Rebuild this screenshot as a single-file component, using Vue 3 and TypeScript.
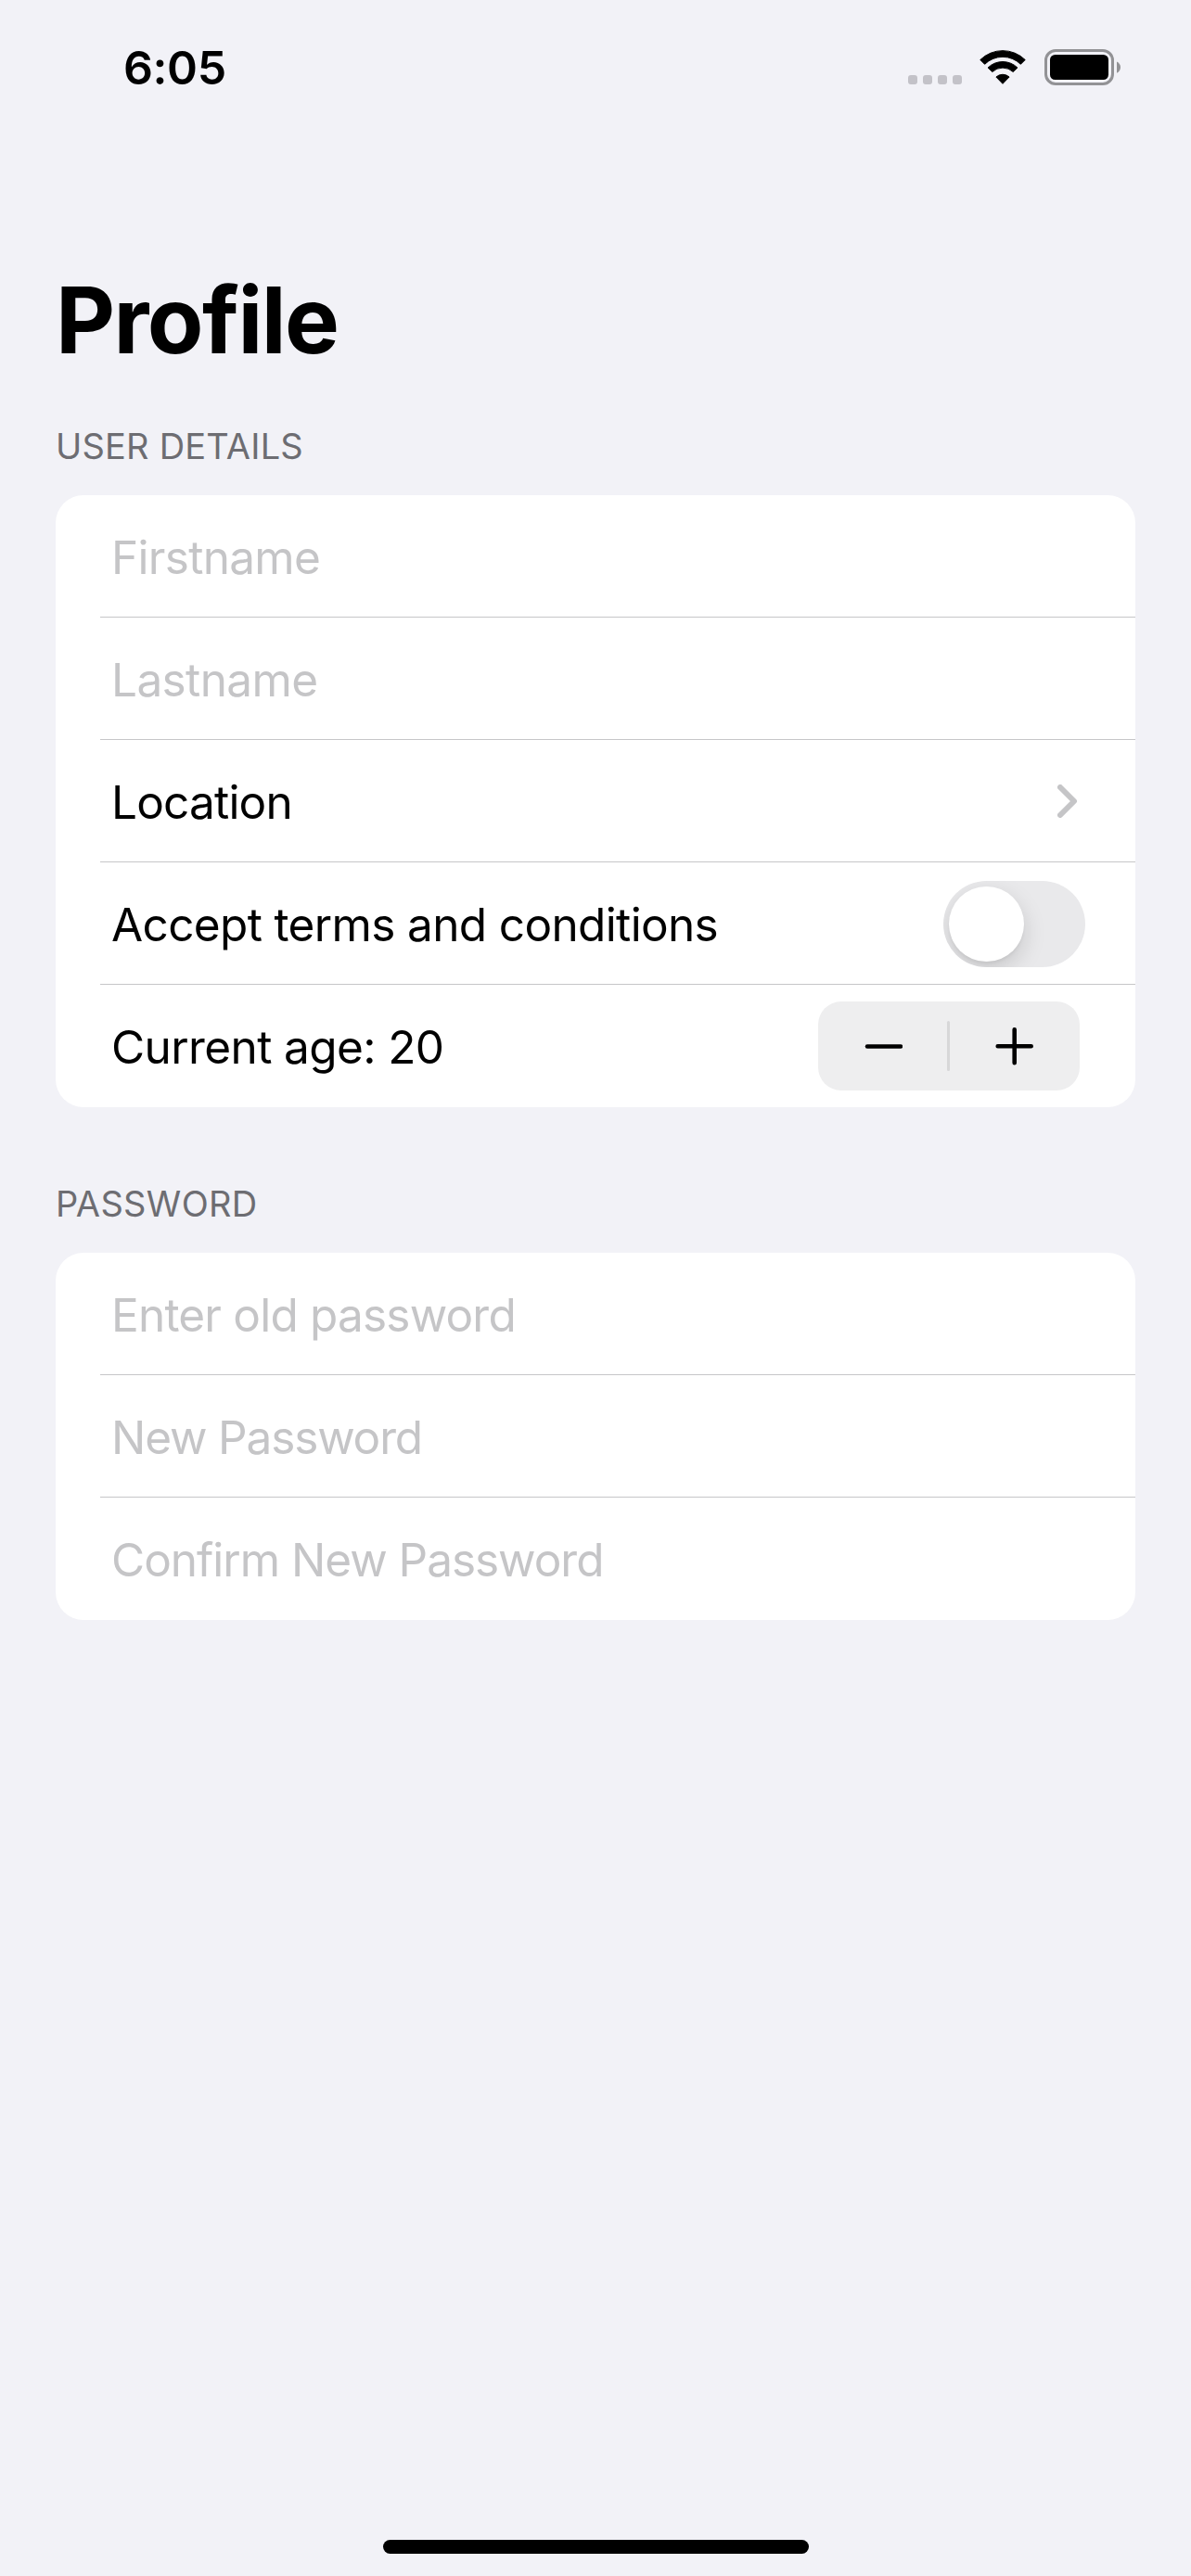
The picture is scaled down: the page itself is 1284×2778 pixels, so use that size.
<script setup lang="ts">
import { ref } from 'vue'

interface Row {
  id: string
  label: string
  kind: 'field' | 'link' | 'toggle' | 'stepper'
  tracking: number
}

interface Section {
  title: string
  tracking: number
  rows: Row[]
}

const age = ref(20)
const accepted = ref(false)

const sections: Section[] = [
  {
    title: 'USER DETAILS',
    tracking: 0.2,
    rows: [
      { id: 'first', label: 'Firstname', kind: 'field', tracking: -0.7 },
      { id: 'last', label: 'Lastname', kind: 'field', tracking: -0.6 },
      { id: 'location', label: 'Location', kind: 'link', tracking: -0.8 },
      { id: 'terms', label: 'Accept terms and conditions', kind: 'toggle', tracking: -0.64 },
      { id: 'age', label: 'Current age: ', kind: 'stepper', tracking: -0.6 },
    ],
  },
  {
    title: 'PASSWORD',
    tracking: 0.35,
    rows: [
      { id: 'old', label: 'Enter old password', kind: 'field', tracking: -0.8 },
      { id: 'new', label: 'New Password', kind: 'field', tracking: -1.15 },
      { id: 'confirm', label: 'Confirm New Password', kind: 'field', tracking: -1.02 },
    ],
  },
]
</script>

<template>
  <div class="screen">
    <header class="status">
      <span class="time">6:05</span>
      <div class="indicators">
        <div class="signal"><i v-for="n in 4" :key="n" /></div>
        <svg class="wifi" width="52" height="39" viewBox="0 0 52 39">
          <g stroke="#000" stroke-width="1" stroke-linejoin="round">
            <path d="M1.8 11.5A34.6 34.6 0 0 1 50.2 11.5L45.4 16.3A27.6 27.6 0 0 0 6.6 16.3Z" />
            <path d="M10.1 20A22.8 22.8 0 0 1 41.9 20L37.2 24.5A16.4 16.4 0 0 0 14.8 24.5Z" />
            <path d="M18.9 30A10.6 10.6 0 0 1 33.1 30L26 37.3Z" />
          </g>
        </svg>
        <svg class="battery" width="83" height="39" viewBox="0 0 83 39">
          <rect x="1.5" y="1.5" width="72" height="36" rx="10.5" fill="none" stroke="#929295" stroke-width="3" />
          <rect x="6" y="6" width="63" height="27" rx="5.5" />
          <path d="M78 13.5C80.4 14.6 82 16.8 82 19.5S80.4 24.6 78 25.7Z" fill="#929295" />
        </svg>
      </div>
    </header>

    <main>
      <h1>Profile</h1>
      <section v-for="s in sections" :key="s.title">
        <h2 :style="{ letterSpacing: s.tracking + 'px' }">{{ s.title }}</h2>
        <ul class="card">
          <li v-for="r in s.rows" :key="r.id" :class="['row', r.kind]">
            <span class="label" :style="{ letterSpacing: r.tracking + 'px' }">{{ r.label }}<template v-if="r.kind === 'stepper'">{{ age }}</template></span>
            <svg v-if="r.kind === 'link'" class="chevron" width="22" height="36" viewBox="0 0 22 36">
              <path d="M3 3L18 18L3 33" fill="none" stroke="#c5c5c7" stroke-width="6" stroke-linecap="round" stroke-linejoin="round" />
            </svg>
            <button v-else-if="r.kind === 'toggle'" class="switch" :class="{ on: accepted }" role="switch" :aria-checked="accepted" @click="accepted = !accepted">
              <span class="knob" />
            </button>
            <div v-else-if="r.kind === 'stepper'" class="buttons">
              <button aria-label="Decrease" @click="age--">
                <svg width="42" height="42" viewBox="0 0 42 42"><path d="M4 21.5H40" /></svg>
              </button>
              <span class="divider" />
              <button aria-label="Increase" @click="age++">
                <svg width="42" height="42" viewBox="0 0 42 42"><path d="M2.7 21.2H38.7M20.7 3.2V39.2" /></svg>
              </button>
            </div>
          </li>
        </ul>
      </section>
    </main>

    <div class="home" />
  </div>
</template>

<style>
body {
  background: #f2f2f7;
}
</style>

<style scoped>
.screen {
  box-sizing: border-box;
  display: flex;
  flex-direction: column;
  width: 1284px;
  height: 2778px;
  padding-bottom: 24px;
  background: #f2f2f7;
  color: #000;
  font-family: Inter, "Liberation Sans", sans-serif;
}

.status {
  display: flex;
  justify-content: space-between;
  align-items: flex-start;
  height: 141px;
  padding: 53px 75px 0 133px;
  box-sizing: border-box;
}

.time {
  font-size: 50px;
  font-weight: 600;
  line-height: 40px;
  letter-spacing: -0.4px;
}

.indicators {
  display: flex;
  align-items: flex-start;
}

.signal {
  display: flex;
  gap: 6px;
  padding-top: 28px;
  margin-right: 18px;
}

.signal i {
  width: 10px;
  height: 10px;
  border-radius: 3px;
  background: #c3c2c8;
}

.wifi {
  margin-right: 19px;
}

main {
  flex: 1;
  padding: 0 60px;
}

h1 {
  margin: 0;
  padding-top: 144px;
  font-size: 99px;
  font-weight: 700;
  line-height: 120px;
  letter-spacing: -1.6px;
}

section {
  margin-bottom: 78px;
}

h2 {
  margin: 0;
  padding: 51px 0 28px;
  font-size: 38px;
  font-weight: 400;
  line-height: 50px;
  color: #6d6d72;
}

section + section h2 {
  padding-top: 1px;
}

.card {
  margin: 0;
  padding: 0;
  list-style: none;
  border-radius: 30px;
  background: #fff;
  overflow: hidden;
}

.row {
  display: flex;
  justify-content: space-between;
  align-items: center;
  box-sizing: border-box;
  height: 132px;
  margin-left: 48px;
  padding: 0 60px 0 12px;
  border-bottom: 1px solid #c6c6c8;
}

.row:last-child {
  border-bottom-color: transparent;
}

.label {
  padding-top: 3px;
  font-size: 49.5px;
  line-height: 60px;
  white-space: pre;
}

.field .label {
  color: #c5c5c7;
}

.link {
  padding-right: 62px;
}

.toggle {
  padding-right: 54px;
}

button {
  display: flex;
  margin: 0;
  padding: 0;
  border: 0;
  background: none;
}

.switch {
  box-sizing: border-box;
  width: 153px;
  height: 93px;
  margin-top: 2px;
  padding: 6px;
  border-radius: 47px;
  background: #e9e9eb;
  overflow: hidden;
}

.switch.on {
  justify-content: flex-end;
  background: #34c759;
}

.knob {
  width: 81px;
  height: 81px;
  border-radius: 50%;
  background: #fff;
  box-shadow: 0 9px 24px rgba(0, 0, 0, 0.15), 0 3px 3px rgba(0, 0, 0, 0.04);
}

.buttons {
  display: flex;
  align-items: center;
  width: 282px;
  height: 96px;
  margin-top: 1px;
  border-radius: 25px;
  background: #eeeeef;
}

.buttons button {
  width: 139px;
  justify-content: center;
}

.buttons button:last-child {
  width: 140px;
}

.buttons path {
  fill: none;
  stroke: #000;
  stroke-width: 4.6;
  stroke-linecap: round;
}

.divider {
  width: 3px;
  height: 54px;
  border-radius: 1.5px;
  background: #d7d7d8;
}

.home {
  align-self: center;
  width: 459px;
  height: 15px;
  border-radius: 8px;
  background: #000;
}
</style>
